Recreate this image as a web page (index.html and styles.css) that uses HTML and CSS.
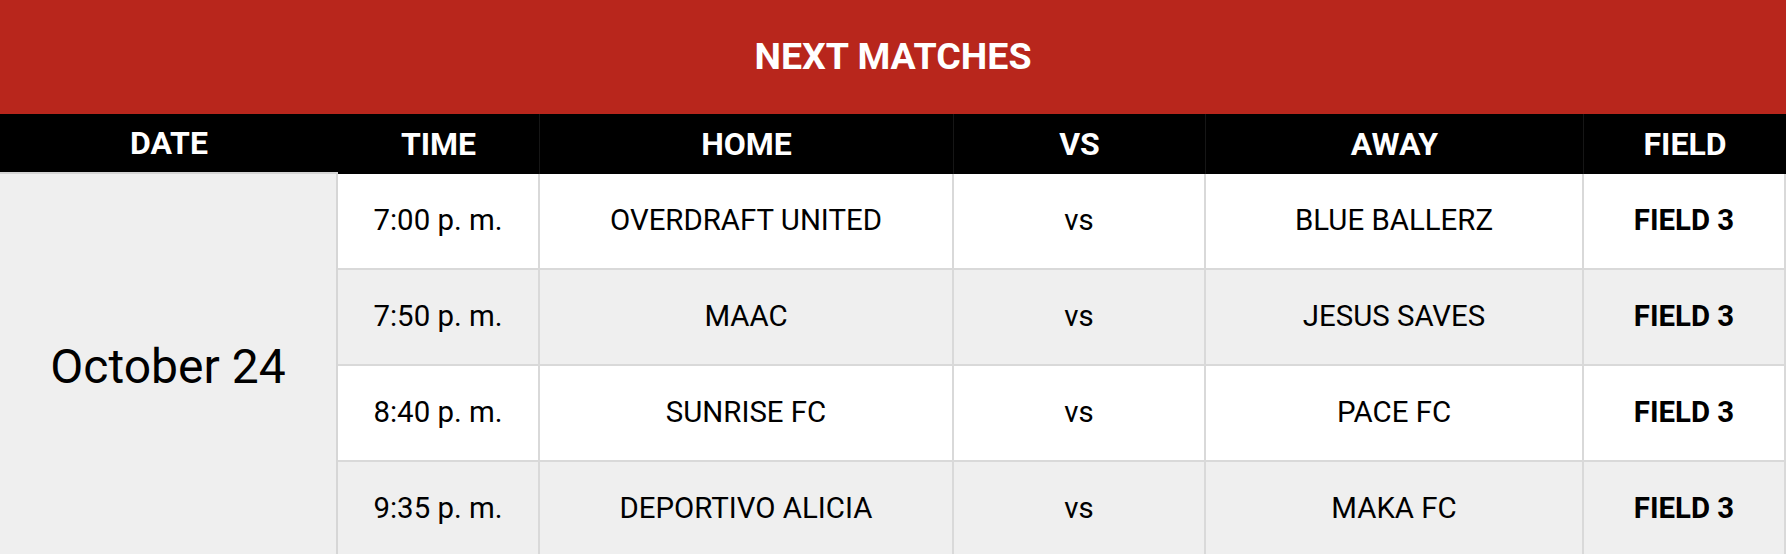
FILE: index.html
```html
<!DOCTYPE html>
<html lang="en">
<head>
<meta charset="utf-8">
<title>Next Matches</title>
<link rel="stylesheet" href="styles.css">
</head>
<body>
<div class="sheet">
  <div class="title">NEXT MATCHES</div>
  <div class="grid">
    <div class="hd hd-date">DATE</div>
    <div class="hd">TIME</div>
    <div class="hd">HOME</div>
    <div class="hd">VS</div>
    <div class="hd">AWAY</div>
    <div class="hd hd-last">FIELD</div>

    <div class="date">October 24</div>

    <div class="c">7:00 p. m.</div>
    <div class="c">OVERDRAFT UNITED</div>
    <div class="c">vs</div>
    <div class="c">BLUE BALLERZ</div>
    <div class="c b">FIELD 3</div>

    <div class="c alt">7:50 p. m.</div>
    <div class="c alt">MAAC</div>
    <div class="c alt">vs</div>
    <div class="c alt">JESUS SAVES</div>
    <div class="c alt b">FIELD 3</div>

    <div class="c">8:40 p. m.</div>
    <div class="c">SUNRISE FC</div>
    <div class="c">vs</div>
    <div class="c">PACE FC</div>
    <div class="c b">FIELD 3</div>

    <div class="c alt">9:35 p. m.</div>
    <div class="c alt">DEPORTIVO ALICIA</div>
    <div class="c alt">vs</div>
    <div class="c alt">MAKA FC</div>
    <div class="c alt b">FIELD 3</div>
  </div>
</div>
</body>
</html>
```

FILE: styles.css
```css
html, body {
  margin: 0;
  padding: 0;
  overflow: hidden;
  background: #ffffff;
}

body {
  font-family: Roboto, "Liberation Sans", Arial, sans-serif;
  color: #000;
}

.sheet {
  width: 1786px;
}

.title {
  height: 114px;
  background: #b8261c;
  color: #fff;
  font-weight: 700;
  font-size: 37.5px;
  display: flex;
  align-items: center;
  justify-content: center;
  padding-bottom: 3px;
  box-sizing: border-box;
}

.grid {
  display: grid;
  grid-template-columns: 338px 202px 414px 252px 378px 202px;
  grid-template-rows: 60px repeat(4, 96px);
}

.hd {
  background: #000;
  color: #fff;
  font-weight: 700;
  font-size: 32px;
  display: flex;
  align-items: center;
  justify-content: center;
  border-right: 1px solid #161616;
}

.hd-date {
  box-sizing: border-box;
  border-bottom: 2px solid #d4d4d4;
  border-right: 0;
}

.hd-last {
  border-right: 0;
}

.date {
  grid-column: 1;
  grid-row: 2 / span 4;
  background: #efefef;
  border-right: 2px solid #d6d6d6;
  font-size: 48px;
  display: flex;
  align-items: center;
  justify-content: center;
}

.c {
  box-sizing: border-box;
  background: #fff;
  border-right: 2px solid #d9d9d9;
  border-bottom: 2px solid #d9d9d9;
  font-size: 29.4px;
  display: flex;
  align-items: center;
  justify-content: center;
  padding-bottom: 3px;
}

.c.alt {
  background: #efefef;
}

.c.b {
  font-weight: 700;
}
```
